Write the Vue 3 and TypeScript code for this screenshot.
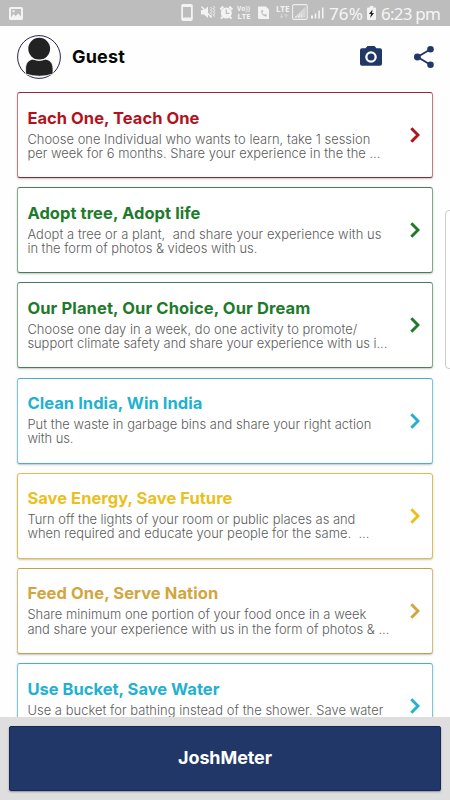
<script setup lang="ts">
interface Line {
  text: string
  width: number
}
interface Card {
  title: Line
  tone: string
  lines: Line[]
}

const cards: Card[] = [
  {
    title: { text: 'Each One, Teach One', width: 172 },
    tone: 'red',
    lines: [
      { text: 'Choose one Individual who wants to learn, take 1 session', width: 343 },
      { text: 'per week for 6 months. Share your experience in the the ...', width: 353 },
    ],
  },
  {
    title: { text: 'Adopt tree, Adopt life', width: 173 },
    tone: 'green',
    lines: [
      { text: 'Adopt a tree or a plant,  and share your experience with us', width: 354 },
      { text: 'in the form of photos & videos with us.', width: 230 },
    ],
  },
  {
    title: { text: 'Our Planet, Our Choice, Our Dream', width: 283 },
    tone: 'green',
    lines: [
      { text: 'Choose one day in a week, do one activity to promote/', width: 330 },
      { text: 'support climate safety and share your experience with us i...', width: 360 },
    ],
  },
  {
    title: { text: 'Clean India, Win India', width: 175 },
    tone: 'cyan',
    lines: [
      { text: 'Put the waste in garbage bins and share your right action', width: 344 },
      { text: 'with us.', width: 46 },
    ],
  },
  {
    title: { text: 'Save Energy, Save Future', width: 205 },
    tone: 'yellow',
    lines: [
      { text: 'Turn off the lights of your room or public places as and', width: 328 },
      { text: 'when required and educate your people for the same.  ...', width: 342 },
    ],
  },
  {
    title: { text: 'Feed One, Serve Nation', width: 191 },
    tone: 'gold',
    lines: [
      { text: 'Share minimum one portion of your food once in a week', width: 339 },
      { text: 'and share your experience with us in the form of photos & ...', width: 362 },
    ],
  },
  {
    title: { text: 'Use Bucket, Save Water', width: 192 },
    tone: 'cyan',
    lines: [
      { text: 'Use a bucket for bathing instead of the shower. Save water', width: 356 },
    ],
  },
]

// Tracks a line of text so that it sets to the given width.
const vFit = {
  mounted(el: HTMLElement, binding: { value: number }) {
    const natural = el.getBoundingClientRect().width
    const count = (el.textContent ?? '').length
    if (count > 0) el.style.letterSpacing = `${(binding.value - natural) / count}px`
  },
}
</script>

<template>
  <div class="screen">
    <div class="status">
      <svg class="photo" width="14" height="13" viewBox="0 0 14 13">
        <path fill="#f3f3f3" fill-rule="evenodd" d="M1.5 0h11A1.5 1.5 0 0 1 14 1.500v10a1.500 1.500 0 0 1-1.500 1.500h-11A1.500 1.500 0 0 1 0 11.500v-10A1.500 1.500 0 0 1 1.500 0zM2 2v8.500l2.500-3.500 2 2 3-2.500 2.500 3V2zM3.500 3.200h2v2h-2z" />
      </svg>
      <div class="indicators">
        <svg width="152" height="20" viewBox="180 4 152 20" fill="#f3f3f3">
          <path fill-rule="evenodd" d="M183 5h8a1.800 1.800 0 0 1 1.800 1.800v13.400A1.800 1.800 0 0 1 191 22h-8a1.800 1.800 0 0 1-1.800-1.800V6.800A1.800 1.800 0 0 1 183 5zM183 8v10.500h8V8z" />
          <path d="M201 11h3l4-3.500v11.500l-4-3.500h-3z" />
          <path d="M201.500 7.500l10 11" stroke="#f3f3f3" stroke-width="1.300" />
          <path d="M210.500 8l1.500 1.500-1.500 1.500 1.500 1.500-1.500 1.500 1.500 1.500-1.500 1.500 1.500 1.500M213.500 7l1.200 1.500-1.200 1.500 1.200 1.500-1.200 1.500 1.200 1.500-1.200 1.500 1.200 1.500" fill="none" stroke="#f3f3f3" stroke-width="1" />
          <circle cx="226.300" cy="14" r="5.500" />
          <path d="M220.300 10.500l3-3M232.300 10.500l-3-3M222.500 18l-1.500 1.700M230 18l1.500 1.700" stroke="#f3f3f3" stroke-width="2" />
          <path d="M226.300 10.500v3.800h3" fill="none" stroke="#bdbdbd" stroke-width="1.200" />
          <text x="237" y="12" font-size="6.500" font-weight="700" textLength="13">Vo))</text>
          <text x="237.500" y="20" font-size="7.500" font-weight="700" textLength="13">LTE</text>
          <path d="M258 7.500h8l3 3V20h-9.500a1.500 1.500 0 0 1-1.500-1.500z" />
          <path d="M261.200 11.500c-.2 3.700 2 6 5.300 6l.3-2-1.800-.6-.9.800c-1-.5-1.600-1.300-1.800-2.300l.9-.6-.4-1.700z" fill="#bdbdbd" />
          <text x="276" y="13" font-size="8" font-weight="700" textLength="13.500">LTE</text>
          <path d="M281.500 15v4M286 15v4M280 17l1.500 2 1.500-2M284.500 17l1.500-2 1.500 2" stroke="#d7d7d7" stroke-width=".9" fill="none" />
          <rect x="292.600" y="5.600" width="14.600" height="14.800" rx="1.500" fill="none" stroke="#eee" stroke-width="1.100" />
          <path d="M305.500 7.500v11h-11z" fill="#d6d6d6" />
          <path d="M294.500 18.500h2v-2zM298 18.500h1.600v-4.500zM301 18.500h1v-6z" />
          <path d="M311 16.500h2v3h-2zM314.700 14.500h1.600v5h-1.600zM318.300 11.500h1.600v8h-1.600zM322 8.500h1.500v11H322z" />
        </svg>
        <span v-fit="34" class="percent">76%</span>
        <svg class="battery" width="9" height="14" viewBox="0 0 9 14">
          <path fill="#f3f3f3" d="M2.800 0h3.400v1.500H8A1 1 0 0 1 9 2.500V13a1 1 0 0 1-1 1H1a1 1 0 0 1-1-1V2.500a1 1 0 0 1 1-1h1.800z" />
          <path fill="#222" d="M5.500 3.500L2 8h2l-.8 4L7 7H5z" />
        </svg>
        <span v-fit="59" class="clock">6:23 pm</span>
      </div>
    </div>

    <header class="header">
      <svg class="avatar" width="44" height="44" viewBox="0 0 44 44">
        <circle cx="22" cy="22" r="21.400" fill="#fff" stroke="#25254a" stroke-width="1" />
        <circle cx="22.200" cy="13.700" r="10.900" fill="#222" />
        <path fill="#222" stroke="#fff" stroke-width=".8" d="M8.600 39v-5.500c0-5.500 3-8.800 7.200-9.300q6.400 2.700 12.800 0c4.200.5 7.400 3.800 7.400 9.300V39Q22.500 43.500 8.600 39z" />
      </svg>
      <div class="name"><span v-fit="53">Guest</span></div>
      <svg class="camera" width="22" height="20" viewBox="0 0 22 20" fill="#213768">
        <path fill-rule="evenodd" d="M7.500 0h7l2 2.200H20a2 2 0 0 1 2 2V17.800a2 2 0 0 1-2 2H2a2 2 0 0 1-2-2V4.200a2 2 0 0 1 2-2h3.500zM11 5.200a5.800 5.800 0 1 0 0 11.600 5.800 5.800 0 0 0 0-11.600z" />
        <circle cx="11" cy="11" r="3.500" />
      </svg>
      <svg class="share" width="20" height="22" viewBox="0 0 20 22" fill="#213768">
        <path d="M16.500 3.200L3.500 11l13 7.800" fill="none" stroke="#213768" stroke-width="1.900" />
        <circle cx="16.500" cy="3.300" r="3.300" />
        <circle cx="3.400" cy="11" r="3.400" />
        <circle cx="16.500" cy="18.700" r="3.300" />
      </svg>
    </header>

    <main class="list">
      <article v-for="card in cards" :key="card.title.text" class="card" :class="card.tone">
        <div class="body">
          <h2 class="title"><span v-fit="card.title.width">{{ card.title.text }}</span></h2>
          <p v-for="line in card.lines" :key="line.text" class="line">
            <span v-fit="line.width">{{ line.text }}</span>
          </p>
        </div>
        <svg class="chevron" width="10" height="16" viewBox="0 0 10 16">
          <path d="M1.300 1.200L8 8l-6.700 6.800" fill="none" stroke="currentColor" stroke-width="2.900" />
        </svg>
      </article>
    </main>

    <footer class="footer">
      <button class="meter"><span v-fit="94">JoshMeter</span></button>
    </footer>
    <div class="edge"></div>
  </div>
</template>

<style>
body {
  margin: 0;
  overflow: hidden;
}
</style>

<style scoped>
.screen {
  position: relative;
  display: flex;
  flex-direction: column;
  width: 450px;
  height: 800px;
  overflow: hidden;
  background: #fefefe;
  font-family: Inter, "Liberation Sans", sans-serif;
}
span {
  display: inline-block;
  white-space: pre;
}
.status {
  display: flex;
  flex: none;
  align-items: center;
  justify-content: space-between;
  box-sizing: border-box;
  height: 26px;
  padding: 0 10px 0 9px;
  background: #bdbdbd;
  color: #f5f5f5;
  font-family: "Noto Sans", sans-serif;
}
.indicators {
  display: flex;
  align-items: center;
  height: 26px;
}
.percent,
.clock {
  height: 26px;
  font-size: 17px;
  line-height: 27px;
}
.percent {
  margin-left: -3px;
}
.battery {
  margin: 0 5px 0 4px;
}
.header {
  display: flex;
  flex: none;
  align-items: center;
  box-sizing: border-box;
  height: 66px;
  padding: 0 17px 5px;
}
.name {
  flex: 1;
  padding-left: 11px;
  color: #080808;
  font-size: 18px;
  font-weight: 700;
  line-height: 22px;
}
.camera {
  margin: 0 32px 2px 0;
}
.share {
  margin-right: -1px;
}
.list {
  display: flex;
  flex: 1;
  flex-direction: column;
  gap: 9.200px;
  min-height: 0;
  padding: 0 17px;
  overflow: hidden;
}
.card {
  display: flex;
  flex: none;
  align-items: center;
  justify-content: space-between;
  box-sizing: border-box;
  height: 86px;
  padding: 0 12px 0 9.400px;
  border: 1px solid;
  border-radius: 3px;
  background: #fff;
  box-shadow: 0 1px 2px rgba(0, 0, 0, 0.22);
}
.body {
  height: 57px;
}
.title {
  margin: 0 0 4px;
  font-size: 16.500px;
  font-weight: 700;
  line-height: 22px;
}
.line {
  height: 14.200px;
  margin: 0;
  color: #5c5c5c;
  font-size: 12.900px;
  font-weight: 300;
  line-height: 14.200px;
}
.red {
  color: #b3121d;
  border-color: #8e2a38 #bd7d86;
}
.green {
  color: #217a2b;
  border-color: #477e58 #82a98d;
}
.cyan {
  color: #22b1d0;
  border-color: #45b1ca #7cc7d7;
}
.yellow {
  color: #eabf20;
  border-color: #ddbd4d;
}
.gold {
  color: #d2a53d;
  border-color: #c4a044 #d5bd7d;
}
.footer {
  display: flex;
  flex: none;
  box-sizing: border-box;
  height: 83px;
  padding: 9px 9px 9px;
  background: #dedede;
}
.meter {
  flex: 1;
  padding: 0 0 2px;
  border: 1px solid #14295a;
  border-radius: 2px;
  background: #213768;
  box-shadow: 0 1px 2px rgba(0, 0, 0, 0.35);
  color: #fff;
  font-family: inherit;
  font-size: 18px;
  font-weight: 700;
}
.edge {
  position: absolute;
  top: 210px;
  right: -8px;
  box-sizing: border-box;
  width: 13px;
  height: 159px;
  border: 1px solid #ccc;
  border-radius: 4px;
  background: #fff;
}
</style>
